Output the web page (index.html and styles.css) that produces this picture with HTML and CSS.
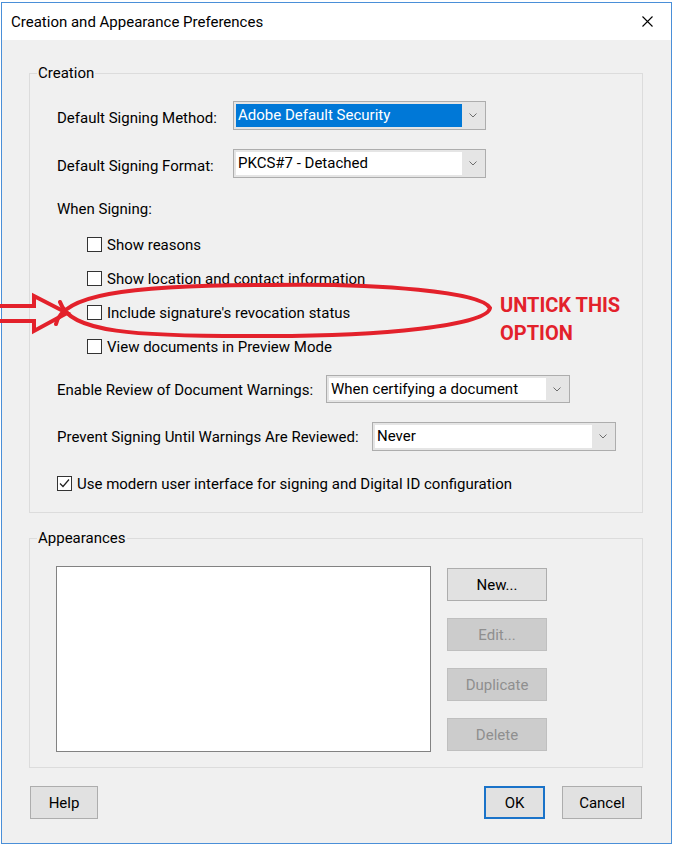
FILE: index.html
```html
<!DOCTYPE html>
<html>
<head>
<meta charset="utf-8">
<link rel="stylesheet" href="styles.css">
</head>
<body>
<div class="window">
  <div class="titlebar">
    <span class="title">Creation and Appearance Preferences</span>
    <svg class="close" width="11" height="11" viewBox="0 0 11 11"><path d="M0.5 0.5 L10.5 10.5 M10.5 0.5 L0.5 10.5" stroke="#000" stroke-width="1.1" fill="none"/></svg>
  </div>
  <div class="content">
    <div class="group creation">
      <span class="group-title">Creation</span>
      <div class="row">
        <span class="lbl lbl-method">Default Signing Method:</span>
        <div class="select select-wide">
          <span class="value selected">Adobe Default Security</span>
          <span class="arrow"><svg width="8" height="5" viewBox="0 0 8 5"><polyline points="0.5,0.5 4,4 7.5,0.5" fill="none" stroke="#6d6d6d" stroke-width="1"/></svg></span>
        </div>
      </div>
      <div class="row row-format">
        <span class="lbl lbl-method">Default Signing Format:</span>
        <div class="select select-wide">
          <span class="value">PKCS#7 - Detached</span>
          <span class="arrow"><svg width="8" height="5" viewBox="0 0 8 5"><polyline points="0.5,0.5 4,4 7.5,0.5" fill="none" stroke="#6d6d6d" stroke-width="1"/></svg></span>
        </div>
      </div>
      <div class="row row-when">
        <span class="lbl">When Signing:</span>
      </div>
      <div class="cb-list">
        <div class="cb-row"><span class="checkbox"></span><span class="lbl">Show reasons</span></div>
        <div class="cb-row"><span class="checkbox"></span><span class="lbl">Show location and contact information</span></div>
        <div class="cb-row"><span class="checkbox"></span><span class="lbl">Include signature's revocation status</span></div>
        <div class="cb-row"><span class="checkbox"></span><span class="lbl">View documents in Preview Mode</span></div>
      </div>
      <div class="row row-enable">
        <span class="lbl lbl-enable">Enable Review of Document Warnings:</span>
        <div class="select select-mid">
          <span class="value">When certifying a document</span>
          <span class="arrow"><svg width="8" height="5" viewBox="0 0 8 5"><polyline points="0.5,0.5 4,4 7.5,0.5" fill="none" stroke="#6d6d6d" stroke-width="1"/></svg></span>
        </div>
      </div>
      <div class="row row-prevent">
        <span class="lbl lbl-prevent">Prevent Signing Until Warnings Are Reviewed:</span>
        <div class="select select-mid">
          <span class="value">Never</span>
          <span class="arrow"><svg width="8" height="5" viewBox="0 0 8 5"><polyline points="0.5,0.5 4,4 7.5,0.5" fill="none" stroke="#6d6d6d" stroke-width="1"/></svg></span>
        </div>
      </div>
      <div class="row row-modern">
        <span class="checkbox checked"><svg width="13" height="13" viewBox="0 0 13 13"><polyline points="2,6.5 5,9.5 11,2.5" fill="none" stroke="#222" stroke-width="1.2"/></svg></span>
        <span class="lbl">Use modern user interface for signing and Digital ID configuration</span>
      </div>
    </div>

    <div class="group appearances">
      <span class="group-title">Appearances</span>
      <div class="listbox"></div>
      <div class="btn-col">
        <span class="btn">New...</span>
        <span class="btn disabled">Edit...</span>
        <span class="btn disabled">Duplicate</span>
        <span class="btn disabled">Delete</span>
      </div>
    </div>

    <div class="footer">
      <span class="btn btn-help">Help</span>
      <div class="footer-right">
        <span class="btn btn-ok">OK</span>
        <span class="btn btn-cancel">Cancel</span>
      </div>
    </div>
  </div>
</div>

<div class="annotation">
  <svg width="674" height="847" viewBox="0 0 674 847">
    <path d="M56 324 C 62 296, 120 285, 270 285 C 380 283, 482 292, 490 308 C 487 326, 380 336, 270 336 C 130 337, 70 332, 60 302" fill="none" stroke="#e3212b" stroke-width="4" stroke-linecap="round"/>
    <polygon points="-4,306 34,306 34,296 67,313 34,331 34,321 -4,321" fill="none" stroke="#e3212b" stroke-width="4" stroke-linejoin="miter"/>
  </svg>
  <div class="note">UNTICK THIS<br>OPTION</div>
</div>
</body>
</html>
```

FILE: styles.css
```css
html, body {
  margin: 0;
  padding: 0;
}

body {
  width: 674px;
  height: 847px;
  overflow: hidden;
  position: relative;
  background: #ffffff;
  font-family: Roboto, "Noto Sans", "DejaVu Sans", sans-serif;
  font-size: 15px;
  color: #000;
}

.window {
  margin: 2px 0 0 1px;
  width: 669px;
  height: 840px;
  border: 1px solid #4a8fd8;
  background: #f0f0f0;
  display: flex;
  flex-direction: column;
}

.titlebar {
  height: 37px;
  background: #ffffff;
  display: flex;
  align-items: center;
  justify-content: space-between;
  padding: 0 18px 0 9px;
}

.title {
  font-size: 15px;
  color: #000;
}

.content {
  flex: 1;
  padding: 33px 28px 0 27px;
  display: flex;
  flex-direction: column;
}

.group {
  position: relative;
  border: 1px solid #dcdcdc;
}

.group-title {
  position: absolute;
  top: -10px;
  left: 7px;
  padding: 0 1px;
  background: #f0f0f0;
  line-height: 18px;
}

.creation {
  padding: 26px 0 14px 27px;
}

.row {
  display: flex;
  align-items: center;
  height: 30px;
}

.lbl {
  padding-top: 2px;
  white-space: nowrap;
}

.lbl-method { width: 176px; padding-top: 5px; }
.lbl-enable { width: 269px; }
.lbl-prevent { width: 315px; }

.row-format { margin-top: 18px; }
.row-when { margin-top: 15px; }
.row-enable { margin-top: 11px; }
.row-prevent { margin-top: 17px; }
.row-modern { margin-top: 17px; }

.cb-list {
  margin-top: 4px;
  padding-left: 30px;
  display: flex;
  flex-direction: column;
}

.cb-row {
  height: 34px;
  display: flex;
  align-items: center;
}

.checkbox {
  width: 15px;
  height: 15px;
  box-sizing: border-box;
  border: 1px solid #333;
  background: #fff;
  margin-right: 5px;
  flex: none;
  display: flex;
  align-items: center;
  justify-content: center;
}

.select {
  box-sizing: border-box;
  height: 29px;
  border: 1px solid #adadad;
  background: #e5e5e5;
  padding: 2px;
  display: flex;
}

.select-wide { width: 253px; }
.select-mid { width: 244px; }
.row-enable .select { height: 28px; }

.select .value {
  flex: 1;
  background: #fff;
  display: flex;
  align-items: center;
  padding-left: 2px;
  white-space: nowrap;
}

.select .value.selected {
  background: #0078d7;
  color: #fff;
}

.select .arrow {
  width: 21px;
  display: flex;
  align-items: center;
  justify-content: center;
}

.appearances {
  margin-top: 25px;
  padding: 27px 0 15px 26px;
  display: flex;
  gap: 16px;
}

.listbox {
  width: 375px;
  height: 186px;
  box-sizing: border-box;
  border: 1px solid #828282;
  background: #fff;
}

.btn-col {
  margin-top: 2px;
  display: flex;
  flex-direction: column;
  gap: 17px;
}

.btn {
  box-sizing: border-box;
  height: 33px;
  border: 1px solid #adadad;
  background: #e1e1e1;
  display: flex;
  align-items: center;
  justify-content: center;
  color: #000;
}

.btn-col .btn { width: 100px; }

.btn.disabled {
  background: #cccccc;
  border-color: #bfbfbf;
  color: #8f8f8f;
}

.footer {
  margin-top: 18px;
  display: flex;
  justify-content: space-between;
  padding: 0 1px;
}

.footer-right {
  display: flex;
  gap: 17px;
}

.btn-help { width: 68px; }
.btn-ok {
  width: 61px;
  border: 2px solid #1a73c9;
}
.btn-cancel { width: 80px; }

.annotation {
  position: absolute;
  left: 0;
  top: 0;
  width: 674px;
  height: 847px;
  pointer-events: none;
}

.annotation svg {
  position: absolute;
  left: 0;
  top: 0;
}

.note {
  position: absolute;
  left: 500px;
  top: 291px;
  font-family: Roboto, "Liberation Sans", sans-serif;
  font-weight: 700;
  font-size: 20px;
  line-height: 28px;
  color: #e3212b;
}
```
